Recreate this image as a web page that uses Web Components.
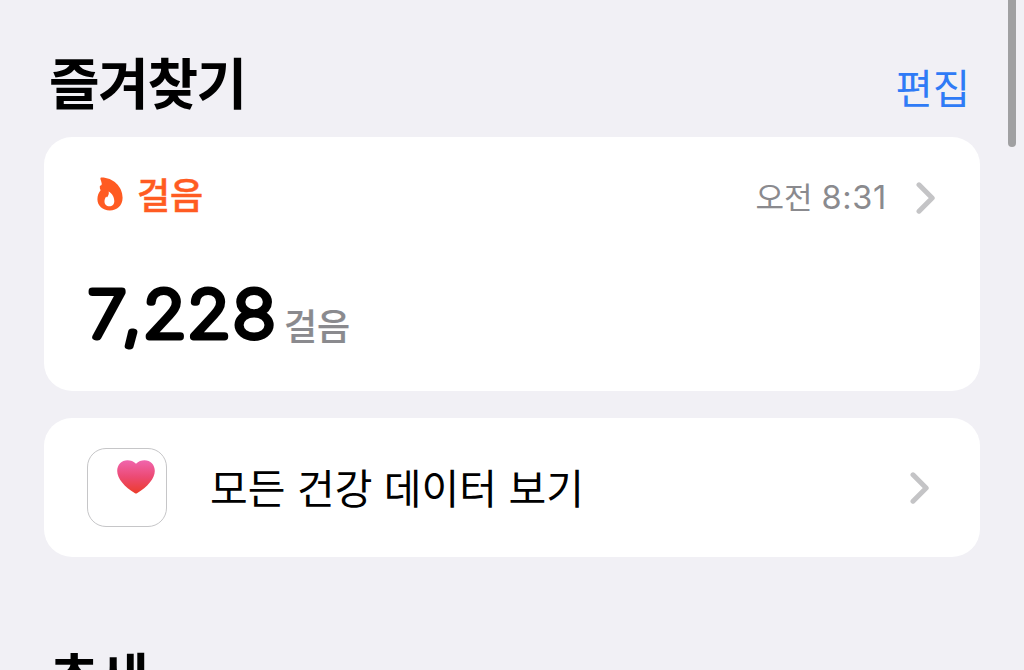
<!DOCTYPE html>
<html lang="ko">
<head>
<meta charset="utf-8">
<title>즐겨찾기</title>
<style>
  body{
    margin: 0;
    height: 670px;
    overflow: hidden;
    background-color: #f1f0f5;
    font-family: "Noto Sans CJK KR", sans-serif;
    --accent-color: #2f7bf6;
    --steps-color: #ff5b22;
    --muted-color: #8a8a8e;
    --chevron-color: #c4c4c6;
  }
</style>
</head>
<body>
<health-page>
  <section-header>즐겨찾기<span slot=action>편집</span></section-header>
  <metric-card>
    <flame-icon slot=icon></flame-icon>
    <span slot=name>걸음</span>
    <span slot=period>오전</span>
    <span slot=time>8:31</span>
    <rounded-number slot=value></rounded-number>
    <span slot=unit>걸음</span>
  </metric-card>
  <link-card>
    <heart-icon slot=icon></heart-icon>
    모든 건강 데이터 보기
  </link-card>
  <section-header class=next>추세</section-header>
</health-page>

<script>
(function(){

function define(name, html)
{
  const template = document.createElement('template');
  template.innerHTML = html;

  customElements.define(name, class extends HTMLElement {
    constructor()
    {
      super();
      this.attachShadow({mode: 'open'}).appendChild(template.content.cloneNode(true));
    }
  });
}

define('health-page', `
<style>
  :host{
    display: block;
    position: relative;
    box-sizing: border-box;
    height: 670px;
    padding: 40px 44px 0;
    overflow: hidden;
  }

  main{
    display: flex;
    flex-direction: column;
  }

  .scroll{
    position: absolute;
    top: -20px;
    right: 8px;
    width: 8px;
    height: 167px;
    border-radius: 4px;
    background-color: #a0a0a2;
  }

  ::slotted(.next){
    margin-top: 78px;
  }
</style>
<main><slot></slot></main>
<div class=scroll></div>`);

define('section-header', `
<style>
  :host{
    display: flex;
    justify-content: space-between;
    height: 97px;
    padding: 0 10px 0 5px;
    box-sizing: border-box;
    white-space: nowrap;
  }

  h2{
    margin: 0;
    font-size: 55px;
    font-weight: 700;
    line-height: 80px;
    letter-spacing: -1.4px;
  }

  .action{
    font-size: 40.5px;
    line-height: 93px;
    color: var(--accent-color);
  }
</style>
<h2><slot></slot></h2>
<div class=action><slot name=action></slot></div>`);

define('chevron-icon', `
<style>
  :host{
    display: block;
    width: 20px;
    height: 32px;
  }

  svg{ display: block; }
</style>
<svg width="20" height="32" viewBox="0 0 20 32" fill="none" stroke="var(--chevron-color)" stroke-width="5" stroke-linecap="round" stroke-linejoin="round">
  <path d="M3 2.8 16.2 16 3 29.2"/>
</svg>`);

define('flame-icon', `
<style>
  :host{ display: block; }
  svg{ display: block; }
</style>
<svg width="26" height="34" viewBox="0 0 26 34">
  <path fill="var(--steps-color)" fill-rule="evenodd" d="M4.5.5C16 .5 25.6 9.5 25.6 20.7C25.6 28.5 20 33.4 12.8 33.4C5.6 33.4.4 28.8.4 22.3C.4 18.5 1.6 15.8 3.6 13.2C3 12 2.7 10.8 2.8 9.5C2.9 8.7 3.3 8.4 4 8.4C4.7 8.2 4.9 7.2 4.6 6C4.3 4.500 3.900 3.500 3.500 2.200C3.200 1.200 3.600.500 4.500.500Z
    M11.6 14.5C12.2 16.4 11.6 18 10.4 19.9C9.9 20.6 9.3 20.5 9.2 19.6C8 21.3 7.5 23 7.5 24.5C7.5 27.3 9.5 29.3 12.4 29.3C15.3 29.3 17.3 27.3 17.3 24.2C17.3 20 15.1 16.2 11.6 14.5Z"/>
</svg>`);

define('heart-icon', `
<style>
  :host{
    display: block;
    box-sizing: border-box;
    width: 80px;
    height: 79px;
    padding: 11px 0 0 29px;
    border: 1.5px solid #c6c6c8;
    border-radius: 19px;
  }

  svg{ display: block; }
</style>
<svg width="38" height="34" viewBox="0 0 38 34">
  <defs>
    <linearGradient id="fill" x1="0" y1="0" x2="0" y2="1">
      <stop offset="0" stop-color="#f065ad"/>
      <stop offset=".5" stop-color="#ec4a73"/>
      <stop offset="1" stop-color="#ec3c2b"/>
    </linearGradient>
  </defs>
  <path fill="url(#fill)" d="M19 3.7C21.3 1.4 24.5.3 27.5.3C33.5.3 37.8 4.8 37.8 11C37.8 18.5 30.5 27 20 33.3C19.3 33.7 18.7 33.7 18 33.3C7.5 27 .2 18.5.2 11C.2 4.8 4.5.3 10.5.3C13.5.3 16.7 1.4 19 3.7Z"/>
</svg>`);

// a hairline face thickened with a round-joined stroke, for the soft ends of the digits
define('rounded-number', `
<style>
  :host{ display: block; }

  svg{
    display: block;
    overflow: visible;
  }

  text{
    font-family: Inter, sans-serif;
    font-size: 63.5px;
    font-weight: 100;
    stroke: #000;
    stroke-width: 6.9px;
    stroke-linejoin: round;
  }
</style>
<svg width="190" height="70" viewBox="0 0 190 70">
  <text transform="scale(1.1 1)" x="0 31.6 50 90.3 132" y="53">7,228</text>
</svg>`);

define('metric-card', `
<style>
  :host{
    display: flex;
    flex-direction: column;
    box-sizing: border-box;
    height: 254px;
    padding: 32px 44px 0;
    border-radius: 28px;
    background-color: #fff;
    white-space: nowrap;
  }

  header{
    display: flex;
    align-items: center;
    height: 54px;
    margin-bottom: 61px;
  }

  .icon{
    margin: 0 0 4px 9px;
  }

  .name{
    margin: 0 0 6px 14px;
    font-size: 36px;
    font-weight: 500;
    line-height: 54px;
    color: var(--steps-color);
    -webkit-text-stroke: .5px;
  }

  .time{
    display: flex;
    align-items: baseline;
    gap: 9px;
    margin: 1px 29px 0 auto;
    line-height: 54px;
    color: var(--muted-color);
  }

  .period{
    font-size: 31px;
  }

  .clock{
    font-family: Inter, sans-serif;
    font-size: 32.5px;
    letter-spacing: .7px;
  }

  chevron-icon{ margin-top: 3px; }

  .reading{
    display: flex;
    height: 70px;
  }

  .unit{
    margin-left: 6px;
    padding-top: 13px;
    font-size: 36px;
    font-weight: 500;
    line-height: 54px;
    color: var(--muted-color);
    -webkit-text-stroke: .2px;
  }
</style>
<header>
  <div class=icon><slot name=icon></slot></div>
  <div class=name><slot name=name></slot></div>
  <div class=time>
    <div class=period><slot name=period></slot></div>
    <div class=clock><slot name=time></slot></div>
  </div>
  <chevron-icon></chevron-icon>
</header>
<div class=reading>
  <slot name=value></slot>
  <div class=unit><slot name=unit></slot></div>
</div>`);

define('link-card', `
<style>
  :host{
    display: flex;
    align-items: center;
    box-sizing: border-box;
    height: 139px;
    margin-top: 27px;
    padding: 0 50px 0 43px;
    border-radius: 28px;
    background-color: #fff;
    white-space: nowrap;
  }

  .label{
    flex: 1;
    margin: 0 0 4px 43px;
    font-size: 41px;
    line-height: 60px;
  }

  chevron-icon{ margin-top: 1px; }
</style>
<slot name=icon></slot>
<div class=label><slot></slot></div>
<chevron-icon></chevron-icon>`);

})();
</script>
</body>
</html>
